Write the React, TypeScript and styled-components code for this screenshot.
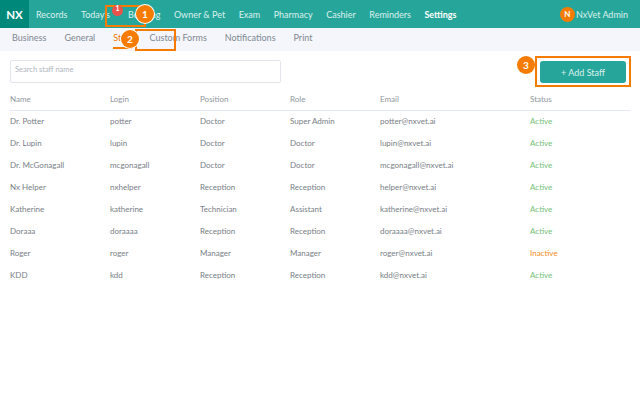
import styled, { createGlobalStyle } from "styled-components";

const GlobalStyle = createGlobalStyle`
  html, body {
    margin: 0;
    padding: 0;
    background: #fff;
    font-family: Lato, "Liberation Sans", sans-serif;
  }
`;

const Page = styled.div`
  position: relative;
  width: 640px;
  height: 400px;
  overflow: hidden;
`;

const TopBar = styled.div`
  display: flex;
  align-items: center;
  height: 28px;
  background: #26a69a;
`;

const Logo = styled.div`
  display: flex;
  align-items: center;
  justify-content: center;
  width: 29px;
  height: 28px;
  background: #00897b;
  color: #fff;
  font-size: 11.5px;
  font-weight: 700;
`;

const NavList = styled.nav`
  display: flex;
  gap: 13.5px;
  margin-left: 7px;
  flex: 1;
`;

const NavItem = styled.span<{ $active?: boolean; $badged?: boolean }>`
  color: ${(p) => (p.$active ? "#fff" : "#dcf1ee")};
  font-size: 9px;
  font-weight: ${(p) => (p.$active ? 700 : 400)};
  white-space: nowrap;
  margin-right: ${(p) => (p.$badged ? "4.5px" : "0")};
`;

const UserBox = styled.div`
  display: flex;
  align-items: center;
  gap: 1px;
  margin-right: 12px;
  color: #dcf1ee;
  font-size: 9px;
`;

const Avatar = styled.span`
  display: flex;
  align-items: center;
  justify-content: center;
  width: 15px;
  height: 15px;
  border-radius: 50%;
  background: #f57c00;
  color: #fff;
  font-size: 8px;
  font-weight: 700;
`;

const SubBar = styled.div`
  display: flex;
  gap: 18px;
  height: 23px;
  padding-left: 12px;
  background: #f4f6fb;
`;

const SubTab = styled.span<{ $active?: boolean }>`
  height: 19px;
  line-height: 19px;
  color: ${(p) => (p.$active ? "#f57c00" : "#7f8892")};
  font-size: 9px;
  white-space: nowrap;
  border-bottom: ${(p) => (p.$active ? "2px solid #f57c00" : "none")};
`;

const Content = styled.main`
  padding: 0 10px;
`;

const ActionRow = styled.div`
  box-sizing: border-box;
  display: flex;
  justify-content: space-between;
  align-items: flex-start;
  height: 41px;
  padding: 9px 4px 0 0;
`;

const SearchBox = styled.input`
  box-sizing: border-box;
  width: 271px;
  height: 23px;
  padding: 0 4px 4px;
  border: 1px solid #e2e5ec;
  border-radius: 2px;
  font-family: inherit;
  font-size: 7.5px;
  outline: none;

  &::placeholder {
    color: #b0b6be;
  }
`;

const AddButton = styled.button`
  width: 86px;
  height: 22px;
  margin-top: 1px;
  border: none;
  border-radius: 3px;
  background: #26a69a;
  color: #dcf1ee;
  font-family: inherit;
  font-size: 9px;
`;

const Table = styled.table`
  width: 620px;
  border-collapse: collapse;
  table-layout: fixed;
`;

const HeadCell = styled.th<{ $width: number }>`
  width: ${(p) => p.$width}px;
  height: 13px;
  padding: 0 0 5px;
  border-bottom: 1px solid #e4e8f0;
  color: #90969e;
  font-size: 8px;
  font-weight: 400;
  text-align: left;
`;

const Cell = styled.td`
  height: 22px;
  padding: 0 0 1px;
  box-sizing: border-box;
  color: #787e86;
  font-size: 8px;
  white-space: nowrap;
`;

const StatusCell = styled(Cell)<{ $active: boolean }>`
  color: ${(p) => (p.$active ? "#74c278" : "#f28c28")};
`;

const Frame = styled.div<{ $x: number; $y: number; $w: number; $h: number }>`
  position: absolute;
  left: ${(p) => p.$x}px;
  top: ${(p) => p.$y}px;
  width: ${(p) => p.$w}px;
  height: ${(p) => p.$h}px;
  box-sizing: border-box;
  border: 2px solid #f57c00;
`;

const Step = styled.div<{ $x: number; $y: number; $ring?: boolean }>`
  position: absolute;
  left: ${(p) => p.$x}px;
  top: ${(p) => p.$y}px;
  display: flex;
  align-items: center;
  justify-content: center;
  width: 18px;
  height: 18px;
  box-sizing: border-box;
  border-radius: 50%;
  background: #f57c00;
  color: #fff;
  font-size: 10px;
  font-weight: 700;
  box-shadow: ${(p) => (p.$ring ? "0 0 0 1px #fff" : "none")};
`;

const Badge = styled.span`
  position: absolute;
  left: 112px;
  top: 5px;
  display: flex;
  align-items: flex-start;
  justify-content: center;
  width: 11px;
  height: 11px;
  border-radius: 50%;
  background: #e8544a;
  color: #fff;
  font-size: 7px;
  line-height: 6px;
  font-weight: 700;
`;

const navItems = ["Records", "Today's", "Booking", "Owner & Pet", "Exam", "Pharmacy", "Cashier", "Reminders"];
const subTabs = ["Business", "General", "Staff", "Custom Forms", "Notifications", "Print"];

const columns = [
  { label: "Name", width: 100 },
  { label: "Login", width: 90 },
  { label: "Position", width: 90 },
  { label: "Role", width: 90 },
  { label: "Email", width: 150 },
  { label: "Status", width: 100 },
];

const staff = [
  ["Dr. Potter", "potter", "Doctor", "Super Admin", "potter@nxvet.ai", "Active"],
  ["Dr. Lupin", "lupin", "Doctor", "Doctor", "lupin@nxvet.ai", "Active"],
  ["Dr. McGonagall", "mcgonagall", "Doctor", "Doctor", "mcgonagall@nxvet.ai", "Active"],
  ["Nx Helper", "nxhelper", "Reception", "Reception", "helper@nxvet.ai", "Active"],
  ["Katherine", "katherine", "Technician", "Assistant", "katherine@nxvet.ai", "Active"],
  ["Doraaa", "doraaaa", "Reception", "Reception", "doraaaa@nxvet.ai", "Active"],
  ["Roger", "roger", "Manager", "Manager", "roger@nxvet.ai", "Inactive"],
  ["KDD", "kdd", "Reception", "Reception", "kdd@nxvet.ai", "Active"],
];

export default function App() {
  return (
    <Page>
      <GlobalStyle />
      <TopBar>
        <Logo>NX</Logo>
        <NavList>
          {navItems.map((item) => (
            <NavItem key={item} $badged={item === "Today's"}>
              {item}
            </NavItem>
          ))}
          <NavItem $active>Settings</NavItem>
        </NavList>
        <UserBox>
          <Avatar>N</Avatar>
          NxVet Admin
        </UserBox>
      </TopBar>
      <SubBar>
        {subTabs.map((tab) => (
          <SubTab key={tab} $active={tab === "Staff"}>
            {tab}
          </SubTab>
        ))}
      </SubBar>
      <Content>
        <ActionRow>
          <SearchBox placeholder="Search staff name" />
          <AddButton>+ Add Staff</AddButton>
        </ActionRow>
        <Table>
          <thead>
            <tr>
              {columns.map((col) => (
                <HeadCell key={col.label} $width={col.width}>
                  {col.label}
                </HeadCell>
              ))}
            </tr>
          </thead>
          <tbody>
            {staff.map((row) => (
              <tr key={row[1]}>
                {row.slice(0, 5).map((value, i) => (
                  <Cell key={i}>{value}</Cell>
                ))}
                <StatusCell $active={row[5] === "Active"}>{row[5]}</StatusCell>
              </tr>
            ))}
          </tbody>
        </Table>
      </Content>

      <Frame $x={105} $y={5} $w={41} $h={22} />
      <Frame $x={135} $y={29} $w={41} $h={22} />
      <Frame $x={535} $y={56} $w={96} $h={31} />
      <Badge>1</Badge>
      <Step $x={136} $y={5} $ring>1</Step>
      <Step $x={121} $y={30} $ring>2</Step>
      <Step $x={517} $y={56}>3</Step>
    </Page>
  );
}
